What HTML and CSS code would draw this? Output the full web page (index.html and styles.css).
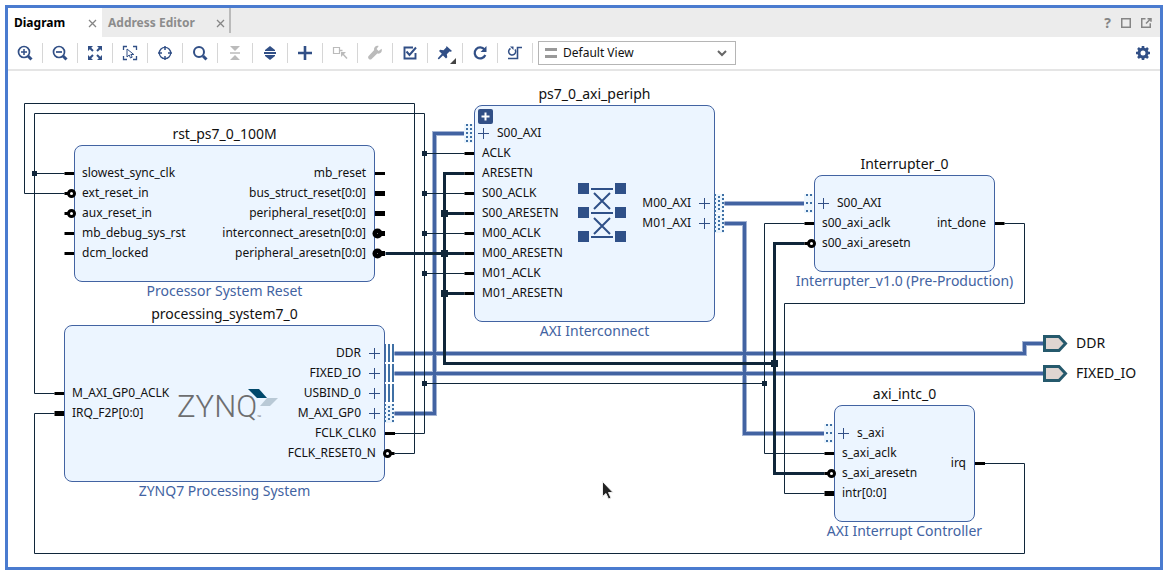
FILE: index.html
```html
<!DOCTYPE html>
<html lang="en">
<head>
<meta charset="utf-8">
<title>Diagram</title>
<link rel="stylesheet" href="styles.css">
</head>
<body>
<main class="window">
  <header class="tabbar">
    <div class="tab tab-active"><button class="tab-label">Diagram</button><button class="close" aria-label="Close Diagram"><svg width="9" height="9" viewBox="0 0 9 9"><path d="M1 1l7 7M8 1l-7 7"/></svg></button></div>
    <div class="tab tab-second"><button class="tab-label">Address Editor</button><button class="close" aria-label="Close Address Editor"><svg width="9" height="9" viewBox="0 0 9 9"><path d="M1 1l7 7M8 1l-7 7"/></svg></button></div>
    <div class="window-actions">
      <button class="help" aria-label="Help">?</button>
      <button aria-label="Maximize"><svg width="10" height="10" viewBox="0 0 10 10"><path d="M.75 .75h8.5v8.5h-8.5z"/></svg></button>
      <button aria-label="Float"><svg width="11" height="10" viewBox="0 0 11 10"><path d="M4.500 .75h-3.750v8.500h8.500v-4"/><path d="M5 5.500l4-4M6.500 .75h3.500v3"/></svg></button>
    </div>
  </header>
  <nav class="toolbar" aria-label="Diagram tools">
    <button class="tool" aria-label="Zoom in"><svg width="16" height="16" viewBox="0 0 16 16"><circle cx="7" cy="7" r="5.500" stroke-width="1.700"/><path d="M4 7h6M7 4v6" stroke-width="1.500"/><path d="M11 11l3.500 3.500" stroke-width="3"/></svg></button>
    <button class="tool" aria-label="Zoom out"><svg width="16" height="16" viewBox="0 0 16 16"><circle cx="7" cy="7" r="5.500" stroke-width="1.700"/><path d="M4 7h6" stroke-width="1.700"/><path d="M11 11l3.500 3.500" stroke-width="3"/></svg></button>
    <button class="tool" aria-label="Zoom fit"><svg width="16" height="16" viewBox="0 0 16 16"><path class="fill" d="M1 1h5L1 6zM15 1v5l-5-5zM1 15v-5l5 5zM15 15h-5l5-5z"/><path d="M2 2l4 4M14 2l-4 4M2 14l4-4M14 14l-4-4" stroke-width="2"/></svg></button>
    <button class="tool" aria-label="Zoom to selection"><svg width="16" height="16" viewBox="0 0 16 16"><path d="M1.500 5V1.500H5M11 1.500h3.500V5M1.500 11v3.500H5M11 14.500h3.500V11" stroke-width="1.300"/><path d="M5 4v8l2.200-2 1.300 3 1.700-.8-1.400-2.700h3z" stroke-width="1"/></svg></button>
    <button class="tool" aria-label="Center"><svg width="16" height="16" viewBox="0 0 16 16"><circle cx="8" cy="8" r="5.700" stroke-width="1.300"/><path d="M8 1v4M8 11v4M1 8h4M11 8h4" stroke-width="1.500"/></svg></button>
    <button class="tool" aria-label="Search"><svg width="16" height="16" viewBox="0 0 16 16"><circle cx="7" cy="7" r="5" stroke-width="2"/><path d="M11 11l3.500 3.500" stroke-width="3"/></svg></button>
    <button class="tool" aria-label="Collapse" disabled><svg width="16" height="16" viewBox="0 0 16 16"><path class="fill" d="M3 1h10L8 6zM3 15h10l-5-5z"/><path d="M3 8h10" stroke-width="1.500"/></svg></button>
    <button class="tool" aria-label="Expand"><svg width="16" height="16" viewBox="0 0 16 16"><path class="fill" d="M8 1l5 4v1H3V5zM8 15l5-4v-1H3v1z"/><path d="M2 8h12" stroke-width="2"/></svg></button>
    <button class="tool" aria-label="Add IP"><svg width="16" height="16" viewBox="0 0 16 16"><path d="M8 1v14M1 8h14" stroke-width="2.600"/></svg></button>
    <button class="tool" aria-label="Make external" disabled><svg width="16" height="16" viewBox="0 0 16 16"><path d="M1.500 2.500h6v6h-6z" stroke-width="1.200"/><path d="M8 5.500h2.500M10 8l5 5.500" stroke-width="1.500"/><path class="fill" d="M9 7h5l-5 5z"/></svg></button>
    <button class="tool" aria-label="Customize" disabled><svg width="16" height="16" viewBox="0 0 16 16"><path class="fill" d="M14.600 3.700l-3 2.300-2-1.900L11.700 1C9 .3 6.700 2 7 5.200L1.600 11c-1.600 2 1.100 4.700 3 3L10.300 8.500c3 .8 5.300-1.800 4.300-4.800z"/></svg></button>
    <button class="tool" aria-label="Validate design"><svg width="16" height="16" viewBox="0 0 16 16"><path d="M11 2.500H2.500v11h11V8" stroke-width="1.900"/><path d="M4.500 6.500L7.500 10l6.500-7.500" stroke-width="2"/></svg></button>
    <button class="tool tool-menu" aria-label="Pin"><svg width="16" height="16" viewBox="0 0 16 16"><path class="fill" d="M9.500 1l5.500 5-1.200.8-1.300-.3-2.700 2.700.5 3-1.300 1.200L6 10.500 2 14.200.8 14l.4-1.200 3.600-4L2 6l1.200-1.300 3.300.6 2.700-2.800z"/></svg></button>
    <button class="tool" aria-label="Regenerate layout"><svg width="16" height="16" viewBox="0 0 16 16"><path d="M12.500 4.500A5.500 5.500 0 1 0 13.300 10" stroke-width="2.200"/><path class="fill" d="M14.500 1v6h-6z"/></svg></button>
    <button class="tool" aria-label="Optimize routing"><svg width="16" height="16" viewBox="0 0 16 16"><path d="M8 4.500A3.500 3.500 0 1 1 3.500 3.500" stroke-width="1.500"/><path class="fill" d="M3 1.500h3.500V5z"/><path d="M1 13.500h9.500v-11H15" stroke-width="1.600"/></svg></button>
    <div class="view-picker">
      <svg class="bars" width="12" height="10" viewBox="0 0 12 10"><path d="M0 1.500h12M0 8.500h12"/></svg>
      <select class="view-select" aria-label="View"><option>Default View</option></select>
      <svg class="chevron" width="10" height="7" viewBox="0 0 10 7"><path d="M1 1l4 4 4-4"/></svg>
    </div>
    <button class="settings" aria-label="Settings"><svg width="16" height="16" viewBox="0 0 16 16"><circle cx="8" cy="8" r="4" stroke-width="3"/><path d="M8 1v3M8 12v3M1 8h3M12 8h3M3 3l2.200 2.200M10.800 10.800L13 13M3 13l2.200-2.200M10.800 5.200L13 3" stroke-width="2.600"/></svg></button>
  </nav>

  <section class="canvas" aria-label="Block design">
    <svg class="wires" aria-hidden="true">
      <defs>
        <g id="dot"><path d="M-2 -2h5v5h-5z"/></g>
        <g id="bigdot"><path d="M-3 -3h7v7h-7z"/></g>
        <g id="solidport"><path d="M0 -9h1v18h-1zM3 -9h2v18h-2zM7 -9h2v18h-2z" fill="#3f70a5"/></g>
        <g id="dotcol"><path d="M0 -9h2v2h-2zM0 -5h2v2h-2zM0 -1h2v2h-2zM0 3h2v2h-2zM0 7h2v2h-2z" fill="#3f70a5"/></g>
        <g id="dotport"><path d="M0 -9h9v19h-9z" fill="#edf6fd"/><use href="#dotcol" x="-1"/><path d="M3 -7h2v2h-2zM3 -3h2v2h-2zM3 1h2v2h-2zM3 5h2v2h-2z" fill="#3f70a5"/><use href="#dotcol" x="7"/></g>
        <g id="leftport"><path d="M0 -9h9v19h-9z" fill="#edf6fd"/><path d="M2 -9h2v2h-2zM6 -9h2v2h-2zM2 -1h2v2h-2zM6 -1h2v2h-2zM2 7h2v2h-2zM6 7h2v2h-2z" fill="#3f70a5"/></g>
        <g id="invert"><path d="M-7 0h4" stroke="#000" stroke-width="3"/><circle r="3" fill="#fff" stroke="#000" stroke-width="3"/></g>
      </defs>
      <g transform="translate(-8 -71)">
        <g transform="translate(.5 .5)" fill="none">
          <path class="bus-edge" d="M394 353H1024V343H1044M394 373H1044M724 203H804M724 223H744V433H824M394 413H434V133H464"/>
          <path class="bus" d="M394 353H1024V343H1044M394 373H1044M724 203H804M724 223H744V433H824M394 413H434V133H464"/>
          <g class="thin">
            <path d="M394 453H414V103H24V193H64"/>
            <path d="M394 433H424V113H34V393H54M34 173H64M424 153H464M424 193H464M424 233H464M424 273H464"/>
            <path d="M424 383H764M804 223H764V453H824"/>
            <path d="M54 413H34V553H1024V463H984M1004 223H1024V303H784V493H824"/>
          </g>
          <path class="reset" d="M385 253H464M464 173H444V363H774M444 213H464M444 293H464M804 243H774V473H824"/>
        </g>
        <g fill="#10263a">
          <use href="#dot" x="34" y="173"/><use href="#dot" x="424" y="153"/><use href="#dot" x="424" y="193"/><use href="#dot" x="424" y="233"/><use href="#dot" x="424" y="273"/><use href="#dot" x="424" y="383"/><use href="#dot" x="764" y="383"/>
          <use href="#bigdot" x="444" y="213"/><use href="#bigdot" x="444" y="253"/><use href="#bigdot" x="444" y="293"/><use href="#bigdot" x="774" y="363"/>
        </g>
        <g class="external">
          <path d="M1044.500 336.500H1059L1065.500 343.500L1059 350.500H1044.500z"/>
          <path d="M1044.500 366.500H1059L1065.500 373.500L1059 380.500H1044.500z"/>
        </g>
      </g>
    </svg>

    <article class="block block-reset">
      <h2 class="name">rst_ps7_0_100M</h2>
      <div class="body">
        <ul class="ports"><li>slowest_sync_clk</li><li>ext_reset_in</li><li>aux_reset_in</li><li>mb_debug_sys_rst</li><li>dcm_locked</li></ul>
        <ul class="ports ports-out"><li>mb_reset</li><li>bus_struct_reset[0:0]</li><li>peripheral_reset[0:0]</li><li>interconnect_aresetn[0:0]</li><li>peripheral_aresetn[0:0]</li></ul>
      </div>
      <p class="kind">Processor System Reset</p>
    </article>

    <article class="block block-zynq">
      <h2 class="name">processing_system7_0</h2>
      <div class="body">
        <ul class="ports"><li>M_AXI_GP0_ACLK</li><li>IRQ_F2P[0:0]</li></ul>
        <div class="zynq"><span>ZYNQ</span><small>™</small><svg width="30" height="17" viewBox="0 0 30 17"><path d="M0 0h11l8 9H9z" fill="#00486b"/><path d="M19 9h11l-8 8H12z" fill="#b9c9d6"/></svg></div>
        <ul class="ports ports-out"><li class="bus-port">DDR</li><li class="bus-port">FIXED_IO</li><li class="bus-port">USBIND_0</li><li class="bus-port">M_AXI_GP0</li><li>FCLK_CLK0</li><li>FCLK_RESET0_N</li></ul>
      </div>
      <p class="kind">ZYNQ7 Processing System</p>
    </article>

    <article class="block block-interconnect">
      <h2 class="name">ps7_0_axi_periph</h2>
      <div class="body">
        <button class="expand" aria-label="Expand hierarchy"><svg width="15" height="15" viewBox="0 0 15 15"><path d="M7.500 3.500v8M3.500 7.500h8"/></svg></button>
        <ul class="ports"><li class="bus-port">S00_AXI</li><li>ACLK</li><li>ARESETN</li><li>S00_ACLK</li><li>S00_ARESETN</li><li>M00_ACLK</li><li>M00_ARESETN</li><li>M01_ACLK</li><li>M01_ARESETN</li></ul>
        <svg class="crossbar" width="48" height="60" viewBox="0 0 48 60"><path class="squares" d="M0 0h11v11H0zM37 0h11v11H37zM0 24h11v11H0zM37 24h11v11H37zM0 48h11v11H0zM37 48h11v11H37z"/><path d="M13 6h22M13 30h22M13 54h22M16 10l16 16M32 10L16 26M16 35l16 16M32 35L16 51"/></svg>
        <ul class="ports ports-out"><li class="bus-port">M00_AXI</li><li class="bus-port">M01_AXI</li></ul>
      </div>
      <p class="kind">AXI Interconnect</p>
    </article>

    <article class="block block-interrupter">
      <h2 class="name">Interrupter_0</h2>
      <div class="body">
        <ul class="ports"><li class="bus-port">S00_AXI</li><li>s00_axi_aclk</li><li>s00_axi_aresetn</li></ul>
        <ul class="ports ports-out"><li>int_done</li></ul>
      </div>
      <p class="kind">Interrupter_v1.0 (Pre-Production)</p>
    </article>

    <article class="block block-intc">
      <h2 class="name">axi_intc_0</h2>
      <div class="body">
        <ul class="ports"><li class="bus-port">s_axi</li><li>s_axi_aclk</li><li>s_axi_aresetn</li><li>intr[0:0]</li></ul>
        <ul class="ports ports-out"><li>irq</li></ul>
      </div>
      <p class="kind">AXI Interrupt Controller</p>
    </article>

    <div class="external-labels"><span>DDR</span><span>FIXED_IO</span></div>

    <svg class="wires" aria-hidden="true">
      <g transform="translate(-8 -71)">
        <g transform="translate(.5 .5)" fill="none" stroke="#000">
          <path stroke-width="3" d="M64 173H73.500M64 233H73.500M64 253H73.500M374.500 173H384.500M54 393H63.500M384.500 433H394.500M464 153H473.500M464 173H473.500M464 193H473.500M464 213H473.500M464 233H473.500M464 253H473.500M464 273H473.500M464 293H473.500M804 223H813.500M994.500 223H1004M824 453H833.500M974.500 463H984.500"/>
          <path stroke-width="5" d="M374.500 193H384.500M374.500 213H384.500M374.500 233H384.500M374.500 253H384.500M54 413H63.500M824 493H833.500"/>
          <use href="#invert" x="71" y="193"/><use href="#invert" x="71" y="213"/><use href="#invert" x="811" y="243"/><use href="#invert" x="831" y="473"/>
          <g transform="translate(387 453) scale(-1 1)"><use href="#invert"/></g>
          <circle cx="377" cy="233" r="5" fill="#000" stroke="none"/><circle cx="377" cy="253" r="5" fill="#000" stroke="none"/>
        </g>
        <path d="M377 233h1v1h-1zM377 253h1v1h-1z" fill="#777"/>
        <use href="#solidport" x="385" y="353"/><use href="#solidport" x="385" y="373"/><use href="#solidport" x="385" y="393"/>
        <use href="#dotport" x="385" y="413"/><use href="#dotport" x="715" y="203"/><use href="#dotport" x="715" y="223"/>
        <path d="M464 124h9v19h-9z" fill="#edf6fd"/><use href="#dotcol" x="466" y="133"/><use href="#dotcol" x="470" y="133"/>
        <use href="#leftport" x="804" y="203"/><use href="#leftport" x="824" y="433"/>
        <path d="M602.500 481.500v15l3.500-3 2.500 5.500 2.500-1-2.500-5.500h4.500z" fill="#222" stroke="#eee"/>
      </g>
    </svg>
  </section>
</main>
</body>
</html>
```
FILE: styles.css
```css
* { box-sizing: border-box; }
body {
  display: flex;
  min-height: 100vh;
  margin: 0;
  padding: 5px 4px 3px 5px;
  background: #fff;
  color: #111;
  font: 12px/20px "Noto Sans", sans-serif;
}
button { padding: 0; border: 0; background: none; color: inherit; font: inherit; }
button svg { display: block; }
.window {
  display: flex;
  flex: 1;
  flex-direction: column;
  border: 3px solid #4a7bcf;
}

.tabbar { display: flex; height: 29px; background: #ececec; }
.tab { display: flex; align-items: center; justify-content: space-between; padding: 0 5px 0 6px; color: #8c8c8c; }
.tab-label { height: 28px; font-weight: 700; }
.tab-active { width: 94px; background: #fff; color: #000; }
.tab-second { width: 129px; height: 25px; padding: 4px 4px 0 6px; border-right: 2px solid #bababa; }
.close { padding-top: 1px; }
.close svg { fill: none; stroke: #858585; stroke-width: 1.3; }
.window-actions { display: flex; align-items: center; gap: 10px; margin-left: auto; padding-right: 8px; color: #858585; }
.window-actions svg { fill: none; stroke: #858585; stroke-width: 1.5; }
.help { font-size: 14px; font-weight: 700; }

.toolbar { display: flex; align-items: center; height: 34px; border-bottom: 2px solid #e5e5e5; }
.tool { position: relative; display: grid; place-items: center; width: 35px; height: 20px; border-right: 1px solid #d6d6d6; }
.tool svg, .settings svg { fill: none; stroke: #314f86; }
.tool .fill { fill: #314f86; stroke: none; }
.tool:disabled svg { stroke: #bbb; }
.tool:disabled .fill { fill: #bbb; }
.tool-menu::after { content: ""; position: absolute; right: 6px; bottom: -1px; border: 3px solid #444; border-top-color: transparent; border-left-color: transparent; }
.view-picker { position: relative; width: 198px; height: 24px; margin-left: 5px; }
.view-select { width: 100%; height: 24px; padding: 0 24px; border: 1px solid #b5b5b5; border-radius: 0; appearance: none; background: #fff; color: #111; font: inherit; }
.bars { position: absolute; left: 7px; top: 7px; stroke: #999; stroke-width: 3; }
.chevron { position: absolute; right: 9px; top: 9px; fill: none; stroke: #666; stroke-width: 2; }
.settings { margin-left: auto; padding-right: 9px; }

.canvas { position: relative; flex: 1; min-height: 490px; overflow: hidden; }
.wires { position: absolute; inset: 0; width: 100%; height: 100%; pointer-events: none; }
.thin { stroke: #10263a; stroke-width: 1; }
.reset { stroke: #10263a; stroke-width: 3; }
.bus-edge { stroke: #a3b3d3; stroke-width: 5; }
.bus { stroke: #4263a2; stroke-width: 3; }
.external { fill: #dfd5d1; stroke: #25596c; stroke-width: 3; }

.block { position: absolute; display: flex; flex-direction: column; align-items: center; }
.block-reset { left: 66px; top: 54px; width: 301px; }
.block-zynq { left: 56px; top: 234px; width: 321px; }
.block-interconnect { left: 466px; top: 14px; width: 241px; }
.block-interrupter { left: 806px; top: 84px; width: 181px; }
.block-intc { left: 826px; top: 314px; width: 141px; }
.name, .kind { margin: 0; font-size: 14px; font-weight: 400; line-height: 18px; white-space: nowrap; }
.name { padding-bottom: 2px; }
.kind { color: #4263a2; }
.body {
  position: relative;
  display: flex;
  align-items: center;
  align-self: stretch;
  justify-content: space-between;
  padding: 17px 0 18px;
  border: 1px solid #4263a2;
  border-radius: 8px;
  background: #ecf5ff;
}
.ports { margin: 0; padding: 0; list-style: none; }
.ports li { display: flex; align-items: center; height: 20px; padding: 0 8px 0 7px; white-space: nowrap; }
.ports-out li { justify-content: flex-end; }
.ports .bus-port { gap: 8px; padding: 0 4px 0 3px; }
.bus-port::before {
  content: "";
  width: 11px;
  height: 11px;
  background:
    linear-gradient(#314f86, #314f86) center / 11px 1px no-repeat,
    linear-gradient(#314f86, #314f86) center / 1px 11px no-repeat;
}
.ports-out .bus-port { flex-direction: row-reverse; justify-content: flex-start; }
.expand { position: absolute; left: 3px; top: 3px; border-radius: 2px; background: #314f86; }
.expand path { stroke: #fff; stroke-width: 2; }
.crossbar { position: absolute; left: 103px; top: 77px; fill: none; stroke: #2f5088; stroke-width: 2; }
.crossbar .squares { fill: #2f5088; stroke: none; }
.zynq { position: absolute; left: 112px; top: 63px; display: flex; align-items: flex-end; color: #6d6e70; font: 300 31px/36px Roboto, sans-serif; }
.zynq svg { position: absolute; left: 71px; top: 0; }
.zynq small { padding-bottom: 4px; font: 5px/8px "Noto Sans", sans-serif; }
.external-labels { position: absolute; left: 1068px; top: 257px; display: flex; flex-direction: column; font-size: 14px; line-height: 30px; }
```
